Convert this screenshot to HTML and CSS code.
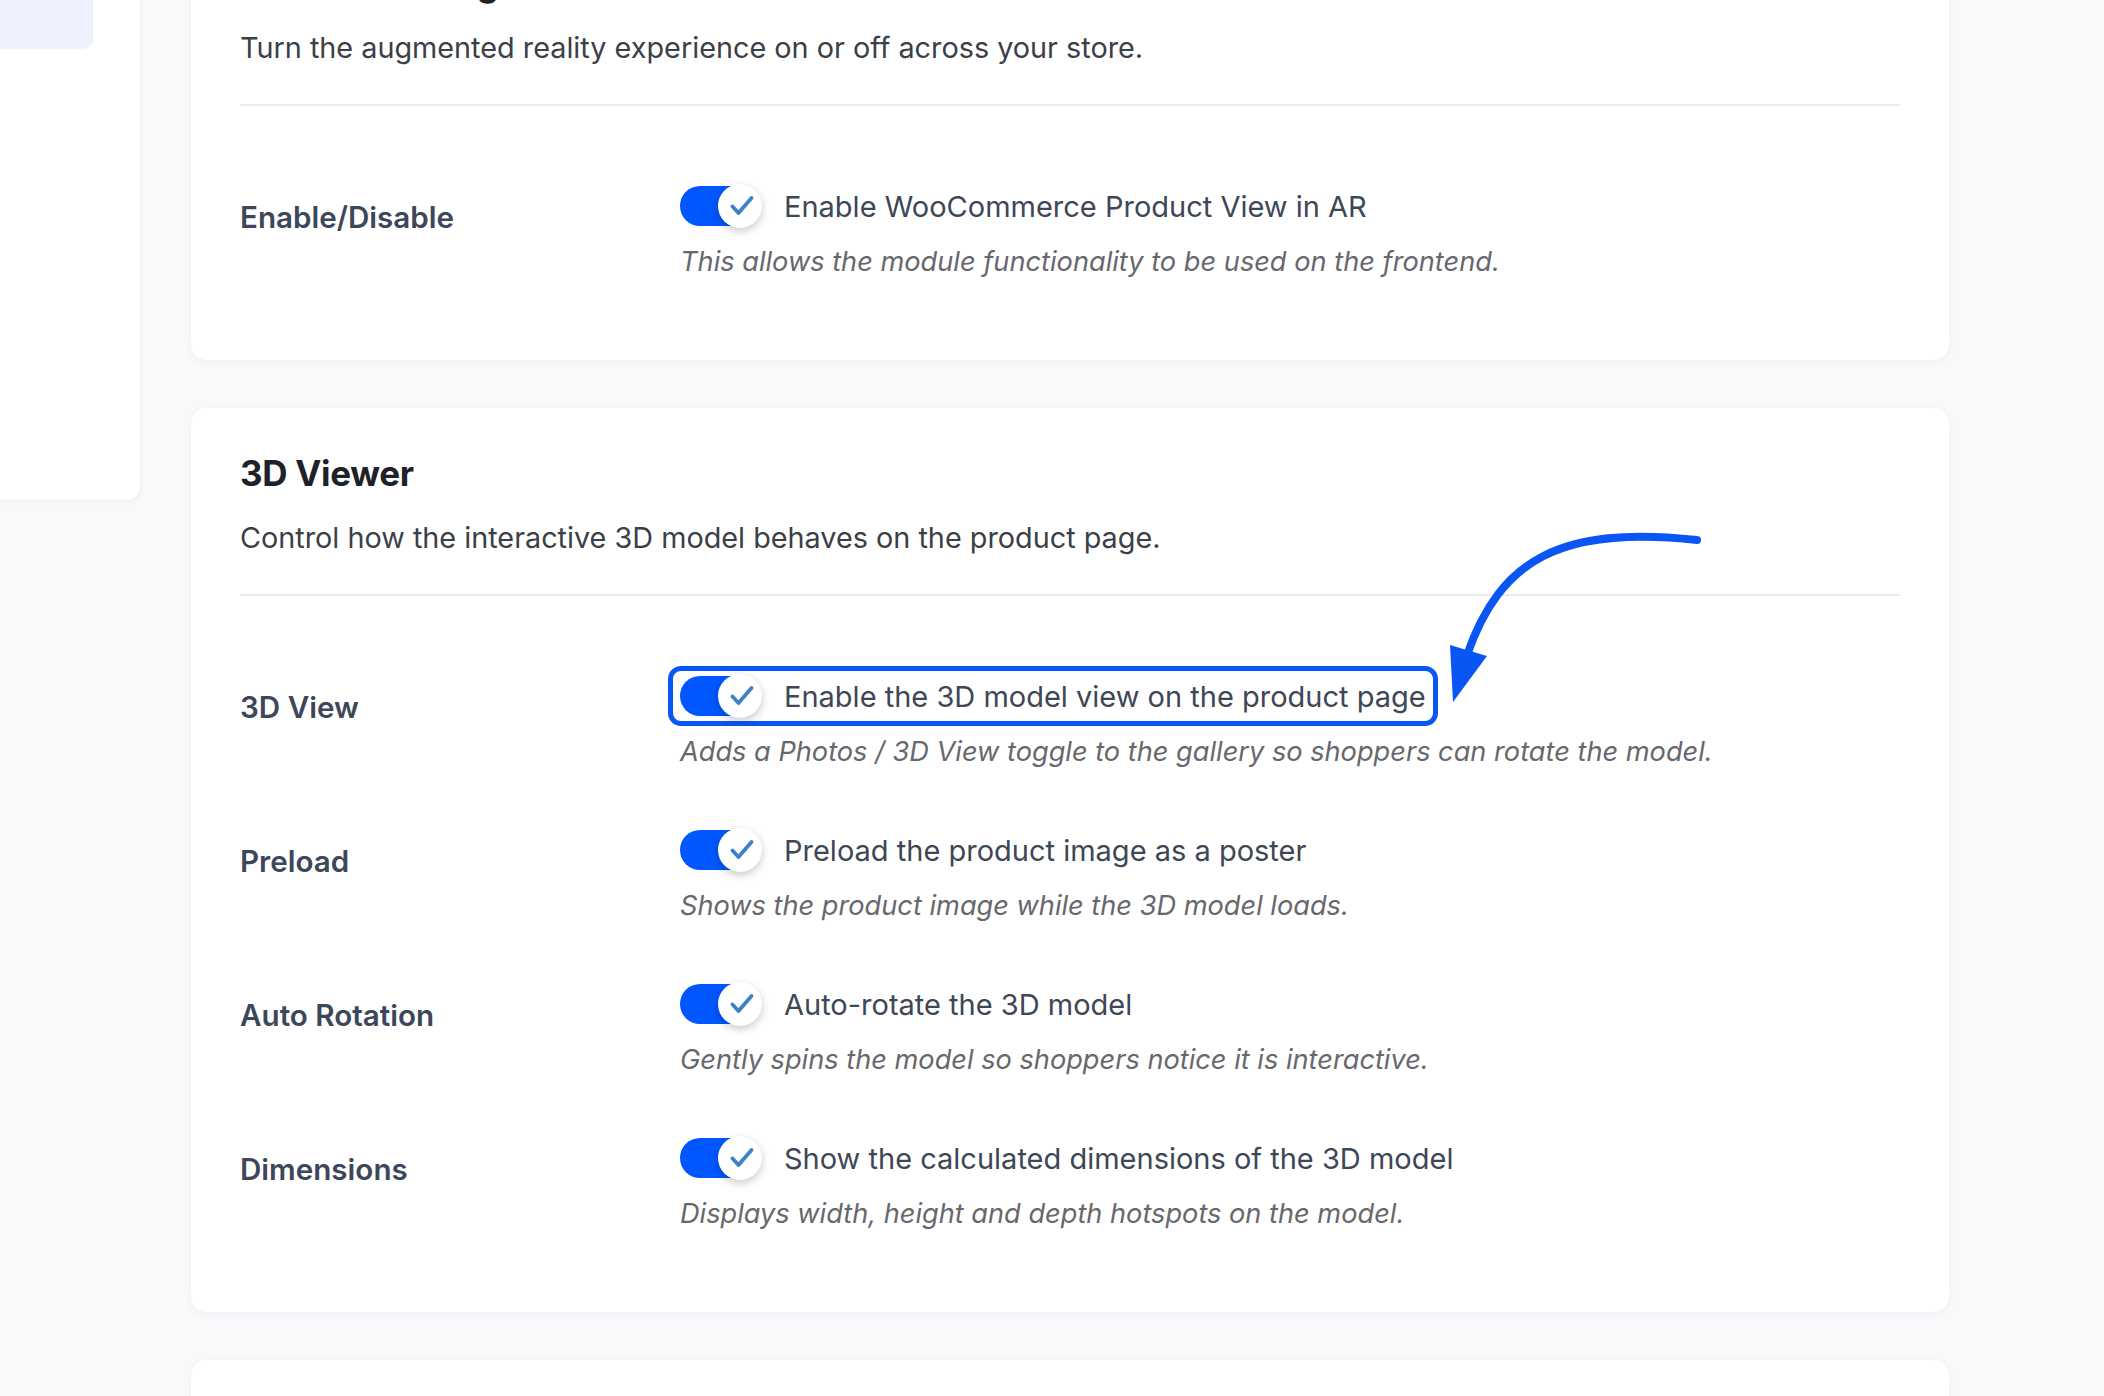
FILE: index.html
```html
<!DOCTYPE html>
<html lang="en">
<head>
<meta charset="utf-8">
<title>AR Settings</title>
<link rel="stylesheet" href="styles.css">
</head>
<body>
<div class="page">
  <aside class="sidebar">
    <div class="nav-item"></div>
  </aside>
  <main class="main">
    <section class="card">
      <h2 class="card-title">General Settings</h2>
      <p class="card-desc">Turn the augmented reality experience on or off across your store.</p>
      <hr class="divider">
      <div class="rows">
        <div class="field-row">
          <div class="field-label">Enable/Disable</div>
          <div class="field-control">
            <label class="control-line">
              <span class="toggle"><span class="knob"><svg viewBox="0 0 44 44" class="check"><path d="M14.5 22.5 L20.5 29 L33.5 14"/></svg></span></span>
              <span class="control-text">Enable WooCommerce Product View in AR</span>
            </label>
            <p class="field-desc">This allows the module functionality to be used on the frontend.</p>
          </div>
        </div>
      </div>
    </section>

    <section class="card">
      <h2 class="card-title">3D Viewer</h2>
      <p class="card-desc">Control how the interactive 3D model behaves on the product page.</p>
      <hr class="divider">
      <div class="rows">
        <div class="field-row">
          <div class="field-label">3D View</div>
          <div class="field-control">
            <label class="control-line highlight">
              <span class="toggle"><span class="knob"><svg viewBox="0 0 44 44" class="check"><path d="M14.5 22.5 L20.5 29 L33.5 14"/></svg></span></span>
              <span class="control-text">Enable the 3D model view on the product page</span>
            </label>
            <p class="field-desc">Adds a Photos / 3D View toggle to the gallery so shoppers can rotate the model.</p>
          </div>
        </div>
        <div class="field-row">
          <div class="field-label">Preload</div>
          <div class="field-control">
            <label class="control-line">
              <span class="toggle"><span class="knob"><svg viewBox="0 0 44 44" class="check"><path d="M14.5 22.5 L20.5 29 L33.5 14"/></svg></span></span>
              <span class="control-text">Preload the product image as a poster</span>
            </label>
            <p class="field-desc">Shows the product image while the 3D model loads.</p>
          </div>
        </div>
        <div class="field-row">
          <div class="field-label">Auto Rotation</div>
          <div class="field-control">
            <label class="control-line">
              <span class="toggle"><span class="knob"><svg viewBox="0 0 44 44" class="check"><path d="M14.5 22.5 L20.5 29 L33.5 14"/></svg></span></span>
              <span class="control-text">Auto-rotate the 3D model</span>
            </label>
            <p class="field-desc">Gently spins the model so shoppers notice it is interactive.</p>
          </div>
        </div>
        <div class="field-row">
          <div class="field-label">Dimensions</div>
          <div class="field-control">
            <label class="control-line">
              <span class="toggle"><span class="knob"><svg viewBox="0 0 44 44" class="check"><path d="M14.5 22.5 L20.5 29 L33.5 14"/></svg></span></span>
              <span class="control-text">Show the calculated dimensions of the 3D model</span>
            </label>
            <p class="field-desc">Displays width, height and depth hotspots on the model.</p>
          </div>
        </div>
      </div>
    </section>

    <section class="card card-next"></section>
  </main>
</div>

<svg class="annotation" viewBox="0 0 2104 1396" width="2104" height="1396">
  <path class="arrow-shaft" d="M1697 540 C1560 525 1500 560 1467 655"/>
  <polygon class="arrow-head" points="1450,645 1487,656 1453,702"/>
</svg>
</body>
</html>
```

FILE: styles.css
```css
* {
  box-sizing: border-box;
}

html, body {
  margin: 0;
  padding: 0;
}

body {
  background: #f8f9fb;
  font-family: Inter, "Noto Sans", "Liberation Sans", sans-serif;
  color: #3d4756;
  overflow: hidden;
  position: relative;
  width: 2104px;
  height: 1396px;
}

.page {
  display: flex;
  align-items: flex-start;
  gap: 50px;
  margin-top: -82px;
}

.sidebar {
  width: 141px;
  height: 583px;
  flex: none;
  background: #ffffff;
  border-radius: 0 0 14px 0;
  box-shadow: 0 1px 4px rgba(20, 30, 50, 0.05);
  border-right: 1px solid #f0f1f4;
  border-bottom: 1px solid #f0f1f4;
}

.nav-item {
  width: 93px;
  height: 131px;
  background: #eef2ff;
  border-radius: 0 10px 10px 0;
}

.main {
  width: 1758px;
  flex: none;
  display: flex;
  flex-direction: column;
  gap: 48px;
}

.card {
  background: #ffffff;
  border-radius: 16px;
  box-shadow: 0 2px 8px rgba(20, 30, 50, 0.045);
  padding: 43px 49px 78px;
}

.card-next {
  height: 260px;
}

.card-title {
  margin: 0;
  font-size: 35px;
  line-height: 44px;
  font-weight: 700;
  color: #1e2228;
  letter-spacing: -0.3px;
}

.card-desc {
  margin: 23px 0 0;
  font-size: 28.8px;
  line-height: 40px;
  color: #3b3f47;
}

.divider {
  margin: 36px 0 0;
  border: 0;
  height: 2px;
  background: #ebecee;
}

.rows {
  margin-top: 70px;
  display: flex;
  flex-direction: column;
  gap: 48px;
}

.field-row {
  display: grid;
  grid-template-columns: 440px 1fr;
}

.field-label {
  padding-top: 21px;
  font-size: 29.6px;
  line-height: 40px;
  font-weight: 600;
  color: #3c475a;
}

.field-control {
  display: flex;
  flex-direction: column;
  align-items: flex-start;
}

.control-line {
  height: 60px;
  display: flex;
  align-items: center;
  gap: 24px;
  font-size: 29px;
  line-height: 40px;
  color: #3d4756;
}

.control-text {
  padding-top: 2px;
}

.control-line.highlight {
  border: 5px solid #0a56f5;
  border-radius: 13px;
  margin-left: -12px;
  padding: 0 7px;
}

.toggle {
  position: relative;
  width: 80px;
  height: 40px;
  flex: none;
  border-radius: 20px;
  background: #0057ff;
}

.knob {
  position: absolute;
  top: -2px;
  right: -2px;
  width: 44px;
  height: 44px;
  border-radius: 50%;
  background: #ffffff;
  box-shadow: 0 3px 8px rgba(0, 0, 0, 0.22);
}

.check {
  display: block;
  width: 44px;
  height: 44px;
}

.check path {
  fill: none;
  stroke: #3b82c9;
  stroke-width: 3.8;
  stroke-linecap: round;
  stroke-linejoin: round;
}

.field-desc {
  margin: 6px 0 0;
  font-size: 27.2px;
  line-height: 40px;
  font-style: italic;
  color: #67686e;
}

.annotation {
  position: absolute;
  left: 0;
  top: 0;
  pointer-events: none;
}

.arrow-shaft {
  fill: none;
  stroke: #0a56f5;
  stroke-width: 8;
  stroke-linecap: round;
}

.arrow-head {
  fill: #0a56f5;
}
```
